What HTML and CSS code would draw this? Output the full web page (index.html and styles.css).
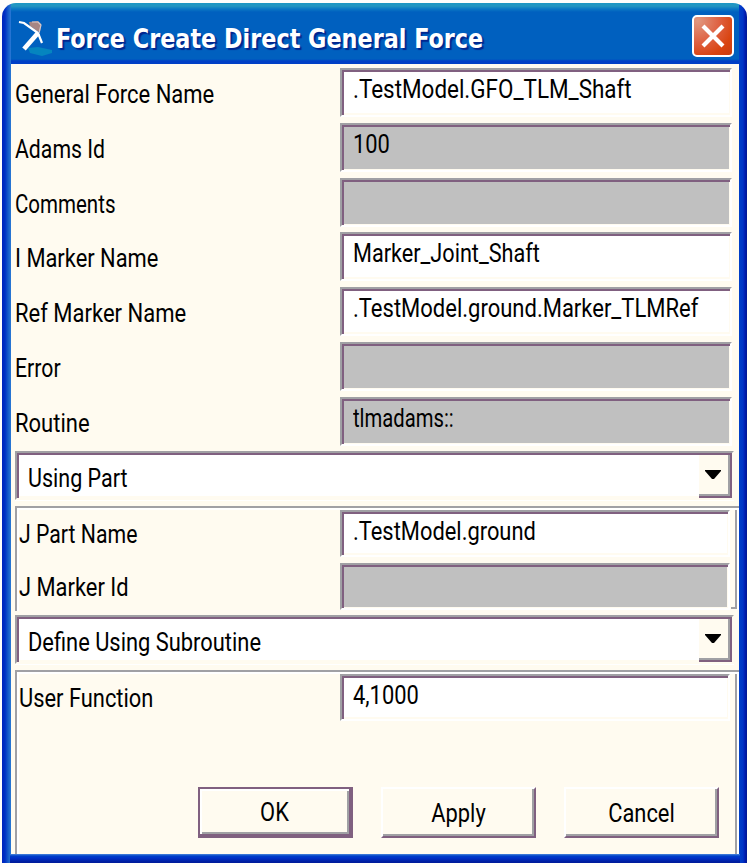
FILE: index.html
```html
<!DOCTYPE html>
<html lang="en">
<head>
<meta charset="utf-8">
<title>Force Create Direct General Force</title>
<link rel="stylesheet" href="styles.css">
</head>
<body>
<main class="window">
  <header class="titlebar">
    <svg class="logo" width="36" height="42" viewBox="0 0 36 42">
      <path d="M10 29 L20 28 34 31 34 34 24 37 12 34Z" fill="#0585bf"/>
      <path d="M11 3 L20 2 23 5 22 13 19 12 12 7Z" fill="#a78684"/>
      <path d="M1 3 L6 4 20 14 24 24" fill="none" stroke="#fff" stroke-width="2.2"/>
      <path d="M14 3 L20 3 23 6 21 14" fill="none" stroke="#d8c8c8" stroke-width="1.2"/>
      <path d="M20 14 L6 30" fill="none" stroke="#fff" stroke-width="4.6"/>
    </svg>
    <h1 class="title">Force Create Direct General Force</h1>
    <button class="close" aria-label="Close">
      <svg width="24" height="24" viewBox="0 0 24 24"><path d="M2 2 L22 22 M22 2 L2 22" stroke="#fff" stroke-width="4.2"/></svg>
    </button>
  </header>
  <form class="content">
    <section class="rows">
      <div class="row"><label><span class="t-gfn">General Force Name</span></label><div class="field"><span class="t-shaft">.TestModel.GFO_TLM_Shaft</span></div></div>
      <div class="row"><label><span class="t-adams">Adams Id</span></label><div class="field off"><span>100</span></div></div>
      <div class="row"><label><span class="t-com">Comments</span></label><div class="field off"></div></div>
      <div class="row"><label><span>I Marker Name</span></label><div class="field"><span class="t-mjs">Marker_Joint_Shaft</span></div></div>
      <div class="row"><label><span class="t-rmn">Ref Marker Name</span></label><div class="field"><span class="t-ref">.TestModel.ground.Marker_TLMRef</span></div></div>
      <div class="row"><label><span class="t-err">Error</span></label><div class="field off"></div></div>
      <div class="row"><label><span class="t-rou">Routine</span></label><div class="field off"><span class="t-tlm">tlmadams::</span></div></div>
    </section>
    <div class="combo"><span class="t-up">Using Part</span><i class="drop"><svg width="16" height="9" viewBox="0 0 16 9"><path d="M0 0H16V1L9 9H7L0 1Z"/></svg></i></div>
    <section class="group part">
      <div class="row"><label><span class="t-jpn">J Part Name</span></label><div class="field"><span>.TestModel.ground</span></div></div>
      <div class="row"><label><span>J Marker Id</span></label><div class="field off"></div></div>
    </section>
    <div class="combo"><span>Define Using Subroutine</span><i class="drop"><svg width="16" height="9" viewBox="0 0 16 9"><path d="M0 0H16V1L9 9H7L0 1Z"/></svg></i></div>
    <section class="group function">
      <div class="row"><label><span>User Function</span></label><div class="field"><span>4,1000</span></div></div>
      <div class="actions">
        <button type="button" class="btn default"><span>OK</span></button>
        <button type="button" class="btn"><span>Apply</span></button>
        <button type="button" class="btn"><span>Cancel</span></button>
      </div>
    </section>
  </form>
</main>
</body>
</html>
```
FILE: styles.css
```css
* { box-sizing: border-box; }
body {
  margin: 0;
  padding: 3px 3px 4px 2px;
  width: 750px;
  height: 867px;
  overflow: hidden;
  background: #fffefb;
  font: 25px/30px Roboto, "Liberation Sans", sans-serif;
  color: #000;
}
.window {
  display: flex;
  flex-direction: column;
  width: 745px;
  height: 860px;
  padding: 0 8px 8px 9px;
  border-radius: 14px 14px 0 0;
  background:
    linear-gradient(#1c97c4 0, #2496c0 3px, #0b78c4 6px, #0060bf 9px, #0060bf 56px, #003fc6 58px, #003fc6 61px) 9px 0 / 728px 61px no-repeat,
    linear-gradient(#4b87dc 0, #0040c8 2px, #0030c8 4px, #001c9c 8px) 8px 851px / 730px 9px no-repeat,
    linear-gradient(90deg, #0024bd 0, #0030c4 3px, #1559c8 6px, #2979d4 9px) 0 0 / 9px 860px no-repeat,
    linear-gradient(90deg, #0040c8 0, #0034c4 4px, #001cb0 6px, #00188c 8px) 737px 0 / 8px 860px no-repeat,
    #0028ba;
}
.titlebar {
  display: flex;
  flex: none;
  height: 61px;
  padding: 12px 5px 0 7px;
}
.logo { flex: none; margin-top: 4px; }
.title {
  flex: 1;
  margin: 7px 0 0 2px;
  font: bold 26px/34px "DejaVu Sans Condensed", "DejaVu Sans", sans-serif;
  font-stretch: condensed;
  white-space: nowrap;
  color: #fff;
  text-shadow: 2px 2px 1px #00268f;
  transform: scaleX(.955);
  transform-origin: 0 0;
}
.close {
  display: grid;
  place-items: center;
  flex: none;
  width: 42px;
  height: 42px;
  padding: 0;
  border: 2px solid #fff;
  border-radius: 5px;
  background: radial-gradient(circle at 10% 10%, #e09880 0, #df6040 45%, #d94410 75%, #c93c10 100%);
}
.content {
  flex: none;
  display: flex;
  flex-direction: column;
  width: 728px;
  height: 790px;
  background: #fffbf0;
}
.rows { height: 387px; padding: 4px 7px 0 4px; }
.row { display: flex; justify-content: space-between; height: 54.8px; }
label { padding-top: 12px; }
/* The dialog face is narrower than Roboto, so labels are condensed. */
label span, .field span, .combo span, .btn span {
  display: block;
  white-space: nowrap;
  transform: scaleX(.875);
  transform-origin: 0 0;
}
.btn span { transform-origin: 50% 0; }
label .t-gfn, label .t-rmn, label .t-rou { transform: scaleX(.88); }
label .t-adams, label .t-jpn, label .t-err { transform: scaleX(.85); }
label .t-com { transform: scaleX(.82); }
.combo .t-up { transform: scaleX(.86); }
.field .t-shaft { transform: scaleX(.897); }
.field .t-mjs { transform: scaleX(.866); }
.field .t-tlm { transform: scaleX(.81); }
.field .t-ref { transform: scaleX(.88); }
.field {
  width: 392px;
  height: 49px;
  padding: 5px 0 0 11px;
  border: 2px solid #fff;
  border-top-color: #a0a0a4;
  border-left-color: #a0a0a4;
  background: #fff;
  box-shadow: inset 2px 2px #806080, inset -1px -2px #fffbf0;
}
.off { background: #c0c0c0; box-shadow: inset 2px 2px #806080, inset -1px -1px #fffbf0; }
.combo {
  display: flex;
  justify-content: space-between;
  flex: none;
  width: 719px;
  height: 49px;
  margin-left: 4px;
  padding: 2px 0 2px 11px;
  border: 2px solid #fffbf0;
  border-top-color: #a0a0a4;
  border-left-color: #a0a0a4;
  background: #fff;
  box-shadow: inset 2px 2px #806080, inset 0 -2px #fffbf0, 0 1px #fff;
}
.combo span { padding-top: 9px; }
.drop {
  display: grid;
  place-items: center;
  width: 33px;
  height: 43px;
  padding: 0 3px 2px 0;
  background: #fffbf0;
  border-right: 2px solid #806080;
  border-bottom: 2px solid #806080;
  box-shadow: inset -2px -2px #a0a0a4;
}
.group {
  width: 724px;
  margin: 6px 0 0 4px;
  border-top: 2px solid #a0a0a4;
  border-left: 2px solid #a0a0a4;
  background:
    linear-gradient(#fff, #fff) 0 0 / 100% 2px no-repeat,
    linear-gradient(#fff, #fff) 0 0 / 2px 100% no-repeat,
    linear-gradient(#a0a0a4, #a0a0a4) 718px 2px / 2px 100% no-repeat,
    linear-gradient(#fff, #fff) 720px 2px / 2px 100% no-repeat;
}
.group .row { height: 53px; padding: 0 9px 0 2px; }
.group .field { width: 390px; height: 47px; margin-top: 2px; }
.part {
  height: 105px;
  margin-bottom: 4px;
  background:
    linear-gradient(#fff, #fff) 0 0 / 100% 2px no-repeat,
    linear-gradient(#fff, #fff) 0 0 / 2px 100% no-repeat,
    linear-gradient(#a0a0a4, #a0a0a4) 714px 99px / 6px 2px no-repeat,
    linear-gradient(#a0a0a4, #a0a0a4) 718px 2px / 2px 98px no-repeat,
    linear-gradient(#fff, #fff) 720px 2px / 2px 100px no-repeat;
}
.function { height: 185px; padding-bottom: 0; }
.actions { display: flex; gap: 28px; padding: 62px 0 0 181px; }
.btn {
  width: 155px;
  height: 51px;
  padding: 0;
  border: 2px solid #fff;
  border-right-color: #806080;
  border-bottom-color: #806080;
  background: #fffbf0;
  box-shadow: inset -2px -2px #a0a0a4;
  font: inherit;
  color: #000;
}
.btn span { padding-top: 3px; }
.default {
  border-color: #806080;
  border-right-width: 4px;
  border-bottom-width: 4px;
  box-shadow: inset 2px 2px #fff, inset -2px -2px #a0a0a4;
}
```
